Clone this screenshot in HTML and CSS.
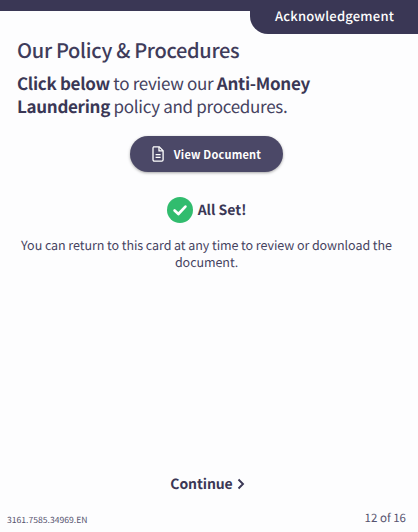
FILE: index.html
```html
<!DOCTYPE html>
<html lang="en">
<head>
<meta charset="utf-8">
<title>Acknowledgement</title>
<link rel="stylesheet" href="styles.css">
</head>
<body>
<div class="card">
  <header class="topbar"><div class="tab">Acknowledgement</div></header>
  <main class="content">
    <h1>Our Policy &amp; Procedures</h1>
    <p class="lead"><b>Click below</b> to review our <b>Anti-Money Laundering</b> policy and procedures.</p>
    <div class="action">
      <button class="doc-btn" type="button">
        <svg class="doc-icon" viewBox="0 0 12 16" width="12" height="16"><path d="M1.5.9h5.8l3.8 3.8v9a1.4 1.4 0 0 1-1.4 1.4H2.4A1.4 1.4 0 0 1 1 13.7V2.3A1.4 1.4 0 0 1 1.5.9z" fill="none" stroke="#fff" stroke-width="1.3"/><path d="M7 1v3.8h4M3.6 8.7h5M3.6 11.3h5" fill="none" stroke="#fff" stroke-width="1.3"/></svg>
        <span>View Document</span>
      </button>
    </div>
    <div class="status">
      <svg class="check" viewBox="0 0 26 26" width="26" height="26"><circle cx="13" cy="13" r="13" fill="#31bc6e"/><path d="M7.6 13.4l3.8 3.6 7-7.4" fill="none" stroke="#fff" stroke-width="2.7" stroke-linecap="round" stroke-linejoin="round"/></svg>
      <span>All Set!</span>
    </div>
    <p class="note">You can return to this card at any time to review or download the document.</p>
  </main>
  <div class="continue">Continue <svg class="chev" viewBox="0 0 8 12" width="8" height="12"><path d="M1.5 1.5L6 6l-4.500 4.500" fill="none" stroke="#3a3755" stroke-width="1.900"/></svg></div>
  <footer class="foot"><span class="code">3161.7585.34969.EN</span><span class="page">12 of 16</span></footer>
</div>
</body>
</html>
```
FILE: styles.css
```css
* { box-sizing: border-box; }
html, body { margin: 0; height: 100%; }
body {
  background: #fdfdfe;
  color: #3a3755;
  font-family: "Noto Sans CJK SC", "Noto Sans", sans-serif;
  text-rendering: geometricPrecision;
}
.card {
  height: 532px;
  display: flex;
  flex-direction: column;
  overflow: hidden;
}
.topbar {
  height: 11px;
  background: #3a3755;
  display: flex;
  justify-content: flex-end;
  flex: none;
}
.tab {
  width: 168px;
  height: 34px;
  background: #3a3755;
  border-bottom-left-radius: 18px;
  color: #fff;
  font-size: 13px;
  font-weight: 500;
  letter-spacing: .2px;
  line-height: 32px;
  padding-left: 25px;
}
.content { padding: 26px 22px 0 17px; flex: 1; }
h1 {
  margin: 0;
  font-size: 20px;
  font-weight: 500;
  letter-spacing: -.3px;
  line-height: 26px;
  color: #3f3c5b;
}
.lead {
  margin: 8px 0 0;
  font-size: 17px;
  letter-spacing: -.3px;
  line-height: 23px;
  color: #45425f;
}
.lead b { font-weight: 700; color: #3a3755; }
.action { display: flex; justify-content: center; margin-top: 19px; }
.doc-btn {
  width: 153px;
  height: 36px;
  border: 0;
  border-radius: 18px;
  background: #4b4867;
  box-shadow: 0 1px 3px rgba(0,0,0,.35);
  color: #fff;
  font: 700 11px "Noto Sans CJK SC", "Noto Sans", sans-serif;
  letter-spacing: .2px;
  display: flex;
  align-items: center;
  justify-content: center;
  gap: 10px;
  padding: 0;
}
.status {
  display: flex;
  align-items: center;
  justify-content: center;
  gap: 5px;
  margin-top: 25px;
  font-size: 14px;
  font-weight: 700;
  line-height: 26px;
}
.note {
  margin: 13px 0 0;
  text-align: center;
  font-size: 12.5px;
  letter-spacing: -.06px;
  line-height: 17px;
  color: #45425f;
}
.continue {
  flex: none;
  display: flex;
  align-items: center;
  justify-content: center;
  gap: 4px;
  padding-right: 3px;
  font-size: 14px;
  letter-spacing: -.1px;
  font-weight: 700;
  line-height: 20px;
}
.foot {
  flex: none;
  display: flex;
  justify-content: space-between;
  align-items: flex-end;
  padding: 0 12px 5px 7px;
  margin-top: 6px;
  height: 32px;
  color: #56536f;
}
.code { font-size: 8.6px; line-height: 12px; padding-bottom: 1px; }
.page { font-size: 11.5px; line-height: 16px; padding-bottom: 1px; }
```
